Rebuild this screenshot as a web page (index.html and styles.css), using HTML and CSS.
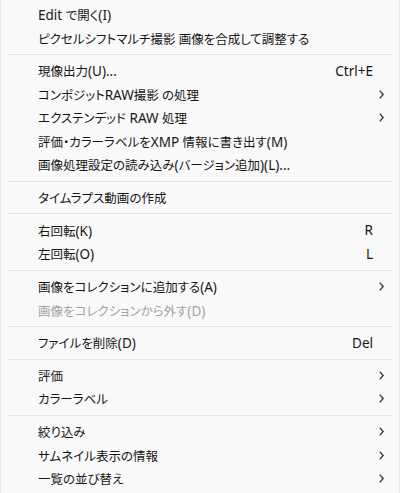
FILE: index.html
```html
<!DOCTYPE html>
<html lang="ja">
<head>
<meta charset="utf-8">
<title>Context menu</title>
<link rel="stylesheet" href="styles.css">
</head>
<body>
<div class="menu">
  <div class="item"><span class="label"><span class="en">Edit </span>で開く<span class="en">(I)</span></span><span class="sub"></span></div>
  <div class="item"><span class="label">ピクセルシフトマルチ撮影 画像を合成して調整する</span><span class="sub"></span></div>
  <div class="sep"></div>
  <div class="item"><span class="label">現像出力<span class="en">(U)...</span></span><span class="accel">Ctrl+E</span><span class="sub"></span></div>
  <div class="item"><span class="label">コンポジット<span class="en">RAW</span>撮影 の処理</span><span class="sub"><svg class="chev" viewBox="0 0 5 9" width="5" height="9"><polyline points="0.7,0.7 4.2,4.5 0.7,8.3"/></svg></span></div>
  <div class="item"><span class="label">エクステンデッド<span class="en"> RAW </span>処理</span><span class="sub"><svg class="chev" viewBox="0 0 5 9" width="5" height="9"><polyline points="0.7,0.7 4.2,4.5 0.7,8.3"/></svg></span></div>
  <div class="item"><span class="label">評価・カラーラベルを<span class="en">XMP </span>情報に書き出す<span class="en">(M)</span></span><span class="sub"></span></div>
  <div class="item"><span class="label">画像処理設定の読み込み<span class="en">(</span>バージョン追加<span class="en">)(L)...</span></span><span class="sub"></span></div>
  <div class="sep"></div>
  <div class="item"><span class="label">タイムラプス動画の作成</span><span class="sub"></span></div>
  <div class="sep"></div>
  <div class="item"><span class="label">右回転<span class="en">(K)</span></span><span class="accel">R</span><span class="sub"></span></div>
  <div class="item"><span class="label">左回転<span class="en">(O)</span></span><span class="accel">L</span><span class="sub"></span></div>
  <div class="sep"></div>
  <div class="item"><span class="label">画像をコレクションに追加する<span class="en">(A)</span></span><span class="sub"><svg class="chev" viewBox="0 0 5 9" width="5" height="9"><polyline points="0.7,0.7 4.2,4.5 0.7,8.3"/></svg></span></div>
  <div class="item disabled"><span class="label">画像をコレクションから外す<span class="en">(D)</span></span><span class="sub"></span></div>
  <div class="sep"></div>
  <div class="item"><span class="label">ファイルを削除<span class="en">(D)</span></span><span class="accel">Del</span><span class="sub"></span></div>
  <div class="sep"></div>
  <div class="item"><span class="label">評価</span><span class="sub"><svg class="chev" viewBox="0 0 5 9" width="5" height="9"><polyline points="0.7,0.7 4.2,4.5 0.7,8.3"/></svg></span></div>
  <div class="item"><span class="label">カラーラベル</span><span class="sub"><svg class="chev" viewBox="0 0 5 9" width="5" height="9"><polyline points="0.7,0.7 4.2,4.5 0.7,8.3"/></svg></span></div>
  <div class="sep"></div>
  <div class="item"><span class="label">絞り込み</span><span class="sub"><svg class="chev" viewBox="0 0 5 9" width="5" height="9"><polyline points="0.7,0.7 4.2,4.5 0.7,8.3"/></svg></span></div>
  <div class="item"><span class="label">サムネイル表示の情報</span><span class="sub"><svg class="chev" viewBox="0 0 5 9" width="5" height="9"><polyline points="0.7,0.7 4.2,4.5 0.7,8.3"/></svg></span></div>
  <div class="item"><span class="label">一覧の並び替え</span><span class="sub"><svg class="chev" viewBox="0 0 5 9" width="5" height="9"><polyline points="0.7,0.7 4.2,4.5 0.7,8.3"/></svg></span></div>
</div>
</body>
</html>
```

FILE: styles.css
```css
html, body {
  margin: 0;
  padding: 0;
  background: #f9f9f9;
}
.menu {
  box-sizing: border-box;
  width: 400px;
  height: 493px;
  overflow: hidden;
  background: #f9f9f9;
  border-left: 1px solid #e6e6e6;
  border-right: 1px solid #e6e6e6;
  padding-top: 3px;
  font-family: "Noto Sans", "Noto Sans CJK JP", sans-serif;
  font-size: 12.5px;
  font-feature-settings: "palt" 1;
  color: #161616;
}
.item {
  display: flex;
  align-items: center;
  height: 23.5px;
  padding-left: 37px;
  padding-right: 12px;
  white-space: nowrap;
}
.label {
  flex: 1;
}
.en {
  font-size: 13.5px;
}
.accel {
  text-align: right;
  font-size: 13.5px;
}
.sub {
  width: 14px;
  display: flex;
  align-items: center;
  padding-left: 6px;
  box-sizing: border-box;
}
.chev {
  display: block;
  fill: none;
  stroke: #2a2a2a;
  stroke-width: 1.25;
}
.disabled {
  color: #a3a3a3;
}
.sep {
  height: 9.2px;
  display: flex;
  align-items: center;
  margin: 0 7px;
}
.sep::before {
  content: "";
  flex: 1;
  height: 1px;
  background: #e4e4e4;
}
```
